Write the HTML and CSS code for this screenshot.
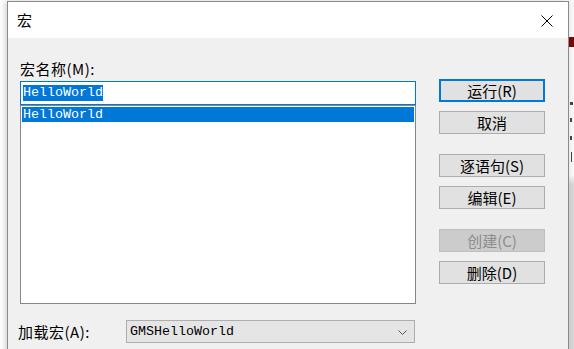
FILE: index.html
```html
<!DOCTYPE html>
<html>
    <head>
        <title>宏</title>
        <meta charset="UTF-8">
        <meta name="viewport" content="width=device-width, initial-scale=1.0">
        <link rel="stylesheet" href="styles.css">
    </head>
    <body>
        <div class="page-peek">
            <span class="peek-bar"></span>
            <span class="peek-dot d1"></span>
            <span class="peek-dot d2"></span>
            <span class="peek-dot d3"></span>
            <span class="peek-dot d4"></span>
        </div>
        <div class="desk">
            <div class="dialog">
                <div class="titlebar">
                    <span class="title">宏</span>
                    <svg class="close" width="12" height="12" viewBox="0 0 12 12">
                        <path d="M0.5 0.5 L11.5 11.5 M11.5 0.5 L0.5 11.5" stroke="#000" stroke-width="1" fill="none"/>
                    </svg>
                </div>
                <div class="content">
                    <div class="left">
                        <div class="label">宏名称(M):</div>
                        <div class="namebox"><span class="sel mono">HelloWorld</span></div>
                        <div class="listbox">
                            <div class="item mono">HelloWorld</div>
                        </div>
                        <div class="loadrow">
                            <span class="loadlabel">加载宏(A):</span>
                            <div class="combo">
                                <span class="mono">GMSHelloWorld</span>
                                <svg class="chev" width="9" height="5" viewBox="0 0 9 5">
                                    <path d="M0.5 0.5 L4.5 4.5 L8.5 0.5" stroke="#555" stroke-width="1" fill="none"/>
                                </svg>
                            </div>
                        </div>
                    </div>
                    <div class="buttons">
                        <div class="btn default">运行(R)</div>
                        <div class="btn">取消</div>
                        <div class="btn spaced">逐语句(S)</div>
                        <div class="btn">编辑(E)</div>
                        <div class="btn spaced disabled">创建(C)</div>
                        <div class="btn">删除(D)</div>
                    </div>
                </div>
            </div>
        </div>
    </body>
</html>
```

FILE: styles.css
```css
html, body{
    margin: 0;
    padding: 0;
    overflow: hidden;
    background-color: #ffffff;
    font-family: "Noto Sans CJK SC", sans-serif;
    font-size: 15px;
    color: #000;
}
.page-peek{
    position: absolute;
    top: 0;
    left: 569px;
    width: 5px;
    height: 349px;
    background: linear-gradient(#f7f7f7 0, #f7f7f7 175px, #d4d4d4 185px, #d4d4d4 100%);
    overflow: hidden;
}
.peek-bar{
    position: absolute;
    top: 37px;
    left: 0;
    width: 5px;
    height: 10px;
    background-color: #7a0a0a;
}
.peek-dot{
    position: absolute;
    left: 1px;
    width: 2px;
    height: 4px;
    background-color: #444;
}
.peek-dot.d1{ top: 102px; width: 3px; height: 3px; }
.peek-dot.d2{ top: 118px; }
.peek-dot.d3{ top: 136px; }
.peek-dot.d4{ top: 152px; height: 10px; width: 1px; left: 2px; }
.desk{
    padding: 1px 0 0 7px;
}
.dialog{
    position: relative;
    width: 560px;
    height: 360px;
    border: 1px solid #8a8a8a;
    background-color: #f0f0f0;
    box-shadow: -2px 0 6px rgba(0, 0, 0, 0.18);
}
.titlebar{
    height: 36px;
    background-color: #ffffff;
    display: flex;
    align-items: center;
    justify-content: space-between;
    padding: 0 15px 0 9px;
}
.title{
    font-size: 15px;
    margin-top: -1px;
}
.close{
    margin-top: 1px;
}
.content{
    display: flex;
    align-items: flex-start;
    padding-left: 12px;
}
.left{
    width: 396px;
    padding-top: 22px;
}
.label{
    line-height: 18px;
    margin-bottom: 3px;
    letter-spacing: 0.5px;
}
.mono{
    font-family: "Liberation Mono", monospace;
    font-size: 13.33px;
    letter-spacing: 0;
}
.namebox{
    box-sizing: border-box;
    height: 24px;
    border: 1px solid #0078d7;
    background-color: #fff;
    display: flex;
    align-items: center;
    padding-left: 2px;
}
.sel{
    background-color: #0078d7;
    color: #fff;
    line-height: 16px;
    height: 16px;
}
.listbox{
    box-sizing: border-box;
    height: 199px;
    border: 1px solid #828790;
    background-color: #fff;
    padding: 1px;
}
.item{
    background-color: #0078d7;
    color: #fff;
    line-height: 15px;
    height: 15px;
    padding-left: 1px;
}
.loadrow{
    display: flex;
    align-items: center;
    margin-top: 16px;
}
.loadlabel{
    width: 108px;
    margin-left: -2px;
    letter-spacing: 0.5px;
}
.combo{
    box-sizing: border-box;
    width: 289px;
    height: 23px;
    border: 1px solid #adadad;
    background-color: #e5e5e5;
    display: flex;
    align-items: center;
    justify-content: space-between;
    padding: 0 7px 0 3px;
}
.chev{
    margin-top: 1px;
}
.buttons{
    display: flex;
    flex-direction: column;
    gap: 9px;
    margin-top: 41px;
    margin-left: 23px;
}
.btn{
    box-sizing: border-box;
    width: 106px;
    height: 23px;
    border: 1px solid #adadad;
    background-color: #e1e1e1;
    display: flex;
    align-items: center;
    justify-content: center;
    line-height: 1;
}
.btn.default{
    border: 2px solid #0078d7;
}
.btn.spaced{
    margin-top: 11px;
}
.btn.disabled{
    background-color: #cccccc;
    border-color: #bfbfbf;
    color: #8d8d8d;
}
```
